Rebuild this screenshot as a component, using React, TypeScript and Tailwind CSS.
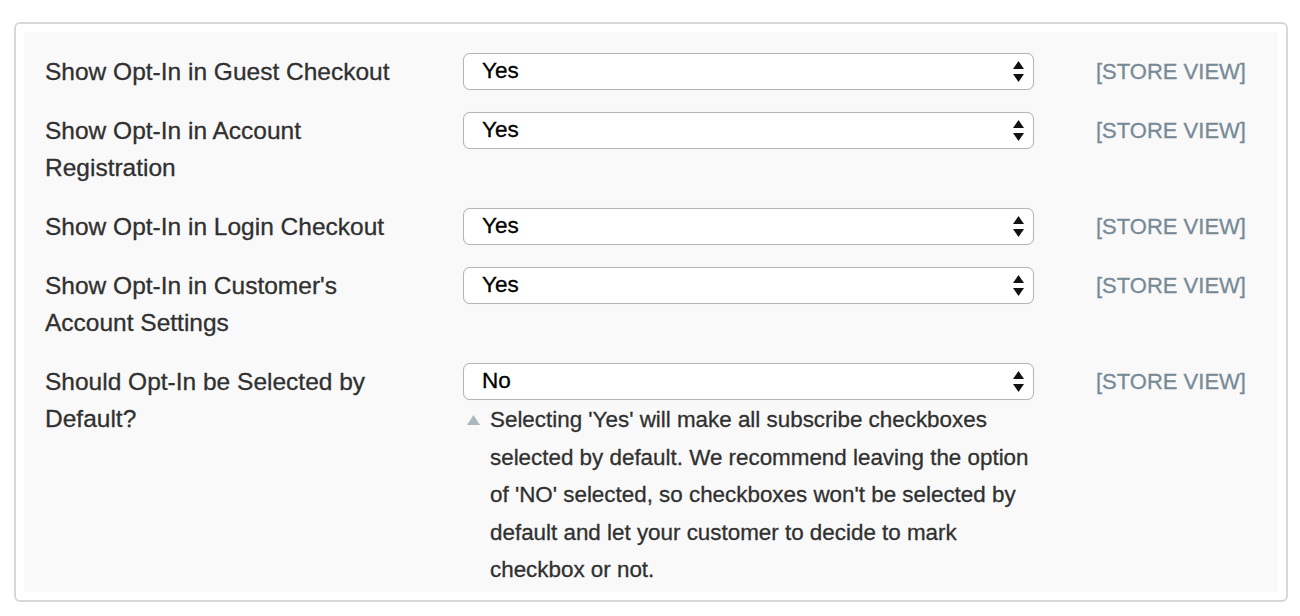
import React from "react";

type Row = {
  label: string;
  value: string;
  note?: string;
};

const rows: Row[] = [
  { label: "Show Opt-In in Guest Checkout", value: "Yes" },
  { label: "Show Opt-In in Account Registration", value: "Yes" },
  { label: "Show Opt-In in Login Checkout", value: "Yes" },
  { label: "Show Opt-In in Customer's Account Settings", value: "Yes" },
  {
    label: "Should Opt-In be Selected by Default?",
    value: "No",
    note: "Selecting 'Yes' will make all subscribe checkboxes selected by default. We recommend leaving the option of 'NO' selected, so checkboxes won't be selected by default and let your customer to decide to mark checkbox or not.",
  },
];

function SelectArrows() {
  return (
    <svg width="11" height="21" viewBox="0 0 11 21" className="shrink-0">
      <path d="M5.5 0 L11 8 L0 8 Z" fill="#111" />
      <path d="M5.5 21 L11 13 L0 13 Z" fill="#111" />
    </svg>
  );
}

function FakeSelect({ value }: { value: string }) {
  return (
    <div className="flex h-[37px] w-full items-center justify-between rounded-[7px] border-[1.5px] border-[#b5b5b5] bg-white pl-[18px] pr-[9px] text-[22.5px] leading-none text-black shadow-[0_0_1px_rgba(0,0,0,0.15)]">
      <span>{value}</span>
      <SelectArrows />
    </div>
  );
}

export default function App() {
  return (
    <div
      className="min-h-[616px] bg-white pt-[22px] pl-[14px] pr-[12px] [-webkit-text-stroke:0.3px_currentColor]"
      style={{ fontFamily: '"Liberation Sans", Arial, Helvetica, sans-serif' }}
    >
      <div className="h-[580px] rounded-[6px] border-2 border-[#d8d8d8] p-[8px]">
        <div className="flex h-full flex-col gap-[22px] bg-[#f9f9f9] pl-[21px] pt-[21px]">
          {rows.map((row) => (
            <div key={row.label} className="flex items-start">
              <div className="w-[418px] shrink-0 pr-[52px] text-[24.5px] leading-[37px] text-[#303030]">
                {row.label}
              </div>
              <div className="w-[571px] shrink-0">
                <FakeSelect value={row.value} />
                {row.note && (
                  <div className="mt-[1px] flex items-start text-[22.4px] leading-[37.5px] text-[#303030]">
                    <span className="flex h-[37.5px] w-[27px] shrink-0 items-center pl-[4px]">
                      <svg width="13" height="10" viewBox="0 0 13 10">
                        <path d="M6.5 0 L13 10 L0 10 Z" fill="#abb7bc" />
                      </svg>
                    </span>
                    <p className="pr-[4px]">{row.note}</p>
                  </div>
                )}
              </div>
              <div className="pl-[62px] text-[22px] leading-[37px] text-[#788a96]">
                [STORE VIEW]
              </div>
            </div>
          ))}
        </div>
      </div>
    </div>
  );
}
